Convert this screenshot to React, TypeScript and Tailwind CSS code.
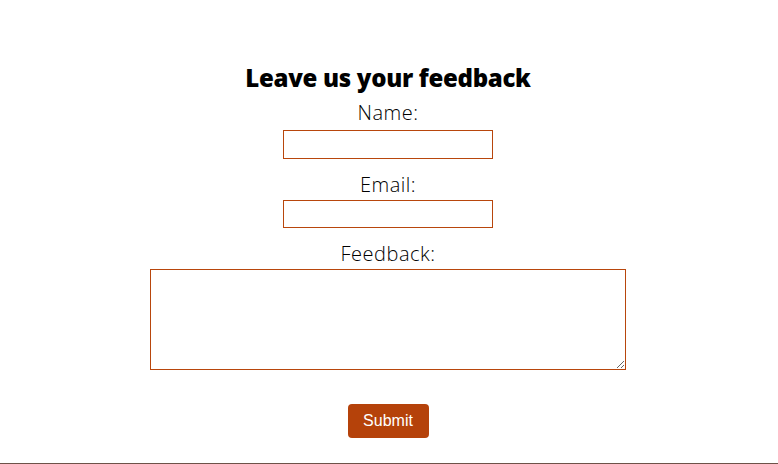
export default function App() {
  return (
    <div className="flex min-h-[464px] flex-col bg-white font-['Open_Sans',sans-serif] text-black">
      <main className="flex flex-1 flex-col items-center pr-[2px] pt-[62px]">
        <h2 className="text-[24px] font-extrabold leading-8 tracking-[-0.3px]">Leave us your feedback</h2>
        <form className="flex flex-col items-center" onSubmit={(e) => e.preventDefault()}>
          <label htmlFor="name" className="mt-[5px] text-[20px] font-light leading-[27px] tracking-[0.5px]">Name:</label>
          <input
            id="name"
            type="text"
            className="mt-[4px] h-[29px] w-[210px] border border-[#b8460c] px-1 outline-none"
          />
          <label htmlFor="email" className="mt-[12px] text-[20px] font-light leading-[27px] tracking-[0.5px]">Email:</label>
          <input
            id="email"
            type="email"
            className="mt-[2px] h-[28px] w-[210px] border border-[#b8460c] px-1 outline-none"
          />
          <label htmlFor="feedback" className="mt-[12px] text-[20px] font-light leading-[27px] tracking-[0.5px]">Feedback:</label>
          <textarea
            id="feedback"
            className="mt-[2px] h-[101px] w-[476px] border border-[#b8460c] p-1 outline-none"
          />
          <button
            type="submit"
            className="mt-[34px] h-[34px] w-[81px] rounded-[4px] bg-[#b5420a] font-['Liberation_Sans',sans-serif] text-[16px] text-white"
          >
            Submit
          </button>
        </form>
      </main>
      <footer className="h-px bg-[#6d5248]" />
    </div>
  );
}
